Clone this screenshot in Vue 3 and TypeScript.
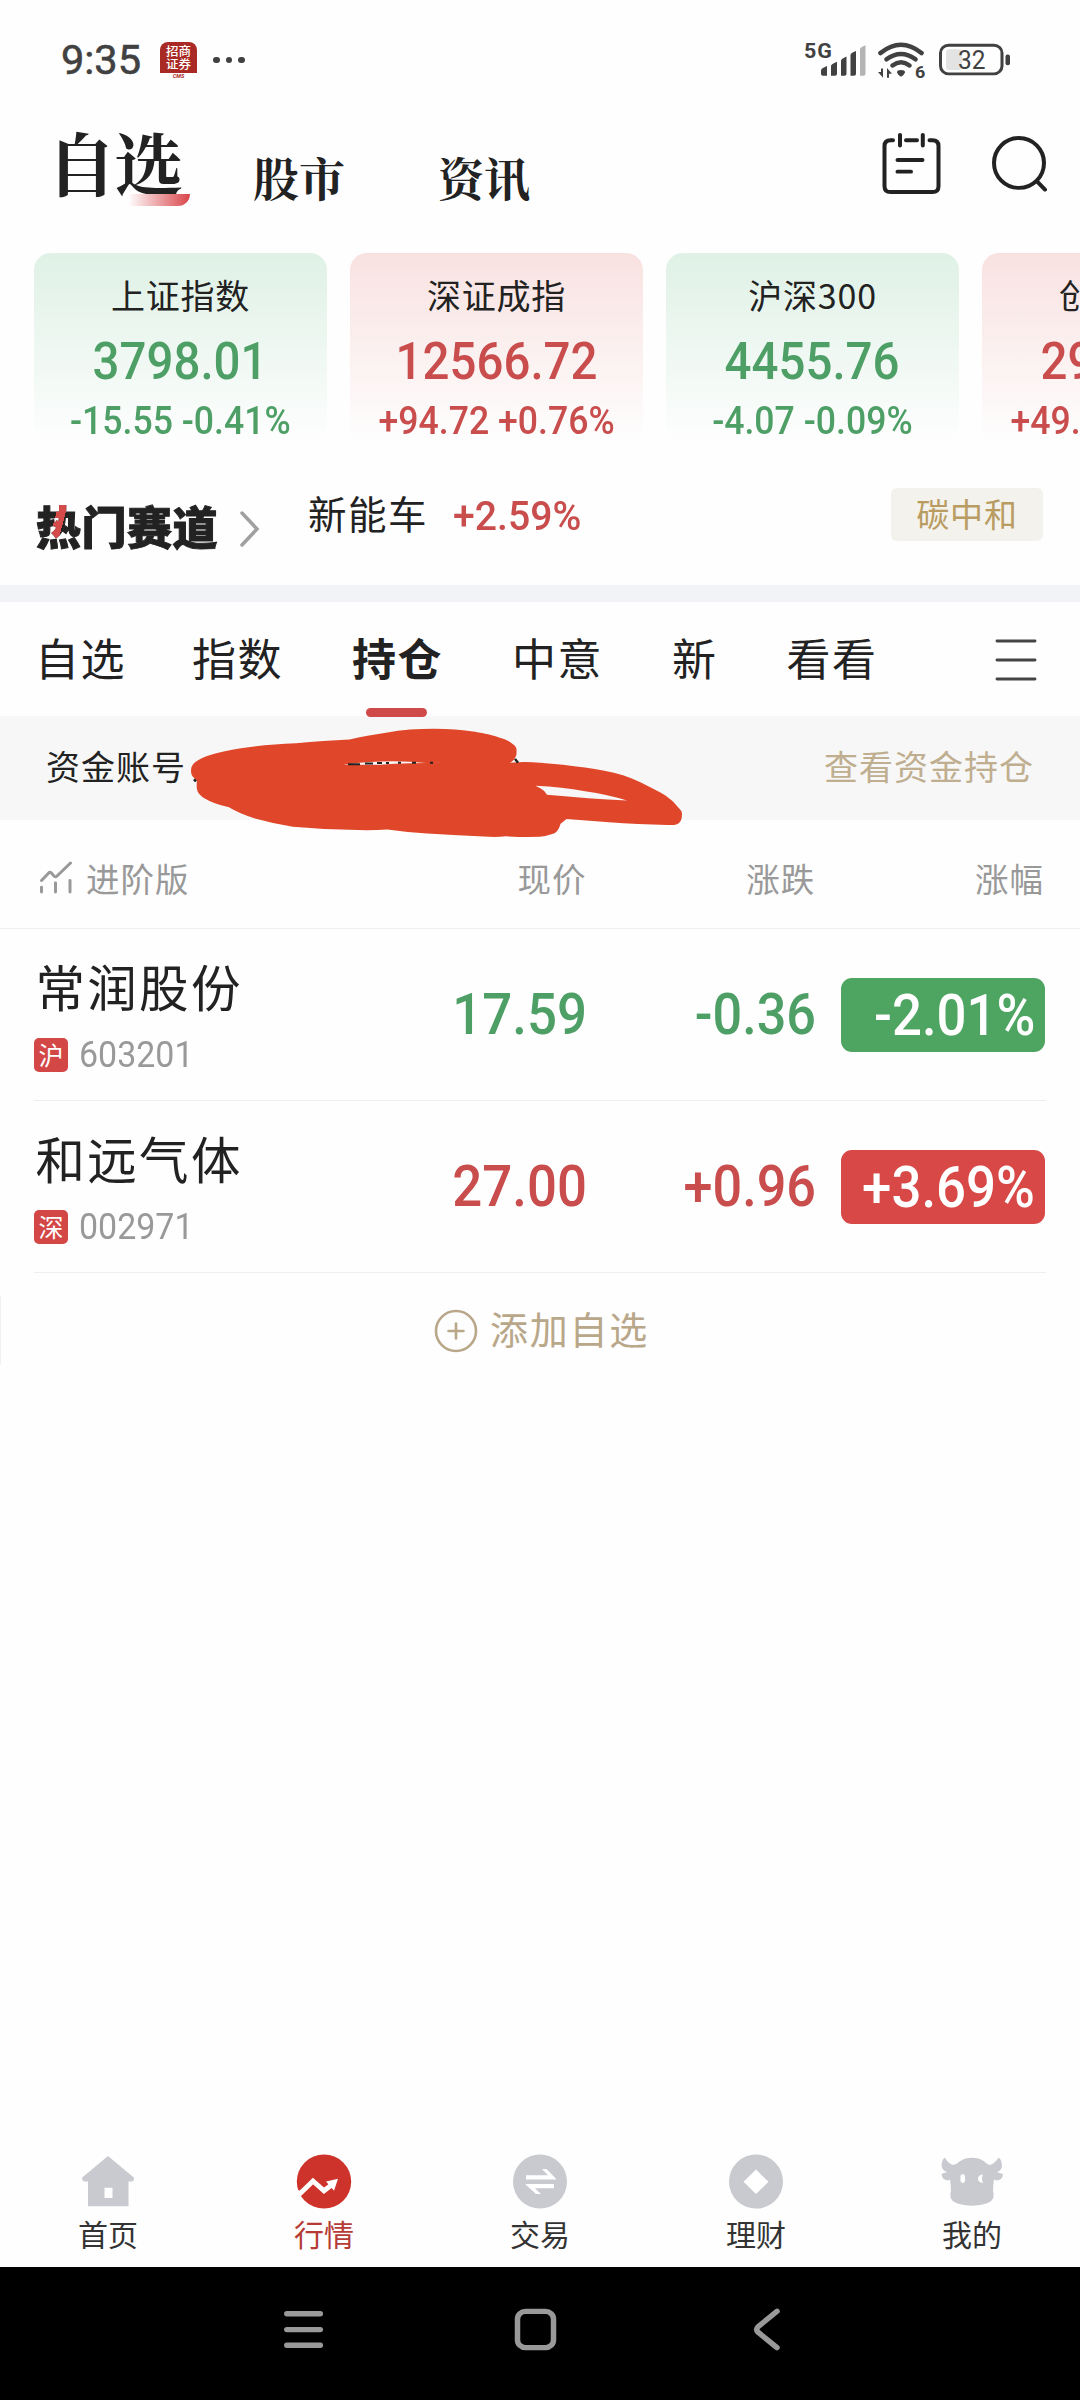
<script setup lang="ts">
interface Quote { name: string; value: string; delta: string; dir: 'up' | 'down' }
interface Stock { name: string; market: string; code: string; price: string; change: string; pct: string; dir: 'up' | 'down' }

const quotes: Quote[] = [
  { name: '上证指数', value: '3798.01', delta: '-15.55 -0.41%', dir: 'down' },
  { name: '深证成指', value: '12566.72', delta: '+94.72 +0.76%', dir: 'up' },
  { name: '沪深300', value: '4455.76', delta: '-4.07 -0.09%', dir: 'down' },
  { name: '创业板指', value: '2964.18', delta: '+49.98 +1.71%', dir: 'up' },
]
const groups = ['自选', '指数', '持仓', '中意', '新', '看看']
const stocks: Stock[] = [
  { name: '常润股份', market: '沪', code: '603201', price: '17.59', change: '-0.36', pct: '-2.01%', dir: 'down' },
  { name: '和远气体', market: '深', code: '002971', price: '27.00', change: '+0.96', pct: '+3.69%', dir: 'up' },
]
const nav = ['首页', '行情', '交易', '理财', '我的']
</script>

<template>
  <div class="screen">
    <header class="status">
      <span class="clock num">9:35</span>
      <span class="app-badge"><b>招商<br>证券</b><i>CMS</i></span>
      <span class="dots"><i /><i /><i /></span>
      <svg class="signals" width="212" height="42.6" viewBox="0 0 212 44" preserveAspectRatio="none">
        <g fill="#414141">
          <text x="0" y="20" font-size="21.500" font-weight="700" textLength="28">5G</text>
          <path d="M17 36v-3.500q0-2 6-4.500v10h-4q-2 0-2-2zM27 38v-10q0-2 6-4.500v12.500q0 2-2 2zM37 38v-15.500q0-2 5.500-4.500v18q0 2-2 2zM46.500 38v-21.500q0-2 5.500-4v23.500q0 2-2 2z" />
          <path d="M56 38v-27.500q0-2 5.500-4v29.500q0 2-2 2z" fill="#b4b4b4" />
          <path d="M97 32q4 0 4 2.500q-1.500 3.500-4 4.500q-2.500-1-4-4.500q0-2.500 4-2.500z" />
          <text x="111" y="40" font-size="18" font-weight="700">6</text>
          <path d="M79 30.500v9.500l-5-6h3v-3.500zM83 40v-10l5 6h-3v4z" />
        </g>
        <g fill="none" stroke="#414141" stroke-width="4.600" stroke-linecap="round">
          <path d="M76.500 14.500q20.500-17 41 0" />
          <path d="M82.500 21q14.500-11 29 0" />
          <path d="M88.500 27.300q8.500-6.500 17 0" />
        </g>
        <rect x="136.500" y="6.500" width="61.500" height="29.500" rx="8" fill="none" stroke="#414141" stroke-width="3" />
        <rect x="142" y="10.500" width="16" height="21.500" rx="3" fill="#e3e3e3" />
        <rect x="201.500" y="16" width="4.500" height="11" rx="2" fill="#414141" />
        <text x="154" y="31" font-size="26" fill="#414141" textLength="27.500" lengthAdjust="spacingAndGlyphs">32</text>
      </svg>
    </header>

    <div class="topbar">
      <span class="main-tab active">自选</span>
      <span class="main-tab">股市</span>
      <span class="main-tab">资讯</span>
      <svg class="top-icons" width="166" height="63.9" viewBox="0 0 166 66" preserveAspectRatio="none" fill="none" stroke="#222" stroke-width="4" stroke-linecap="round">
        <path d="M12 9.500H9.500Q3.500 9.500 3.500 15.500V57Q3.500 63 9.500 63H51.500Q57.500 63 57.500 57V15.500Q57.500 9.500 51.500 9.500H48.500M25 9.500h11M19 4v11M41.800 4v11M16.500 30h25M16.500 42h13.500" />
        <ellipse cx="138" cy="33" rx="25" ry="25.800" /><path d="M156 52l8 8.500" />
      </svg>
    </div>

    <div class="quotes">
      <div v-for="q in quotes" :key="q.name" class="card" :class="q.dir">
        <div class="q-name">{{ q.name }}</div>
        <div class="q-value num">{{ q.value }}</div>
        <div class="q-delta num">{{ q.delta }}</div>
      </div>
    </div>

    <div class="hot">
      <span class="hot-title">热门赛道</span>
      <svg class="hot-arrow" width="22" height="38" viewBox="0 0 22 38"><path d="M3 3L18 19L3 35" fill="none" stroke="#a0a0a0" stroke-width="3.500" stroke-linecap="round" /></svg>
      <span class="sector">新能车</span>
      <span class="sector-pct num">+2.59%</span>
      <span class="tag">碳中和</span>
    </div>

    <div class="groups">
      <span v-for="(g, i) in groups" :key="g" :class="['group', 'g' + i, { on: i === 2 }]">{{ g }}</span>
      <svg class="menu" width="42" height="42" viewBox="0 0 42 42"><path d="M2 2h38M2 21h38M2 40h38" stroke="#444" stroke-width="2.900" stroke-linecap="round" /></svg>
    </div>

    <div class="account">
      <span>资金账号</span>
      <span class="link">查看资金持仓</span>
      <svg class="scribble" width="500" height="116.2" viewBox="188 728 500 120" preserveAspectRatio="none">
        <path fill="#e0472a" fill-rule="evenodd" d="M191 776C191 768 198 765 207 761C218 757 229 755 241 753C259 750 277 749 296 748C315 746 332 745 349.500 744C361 741 374 739 386 737C402 734 418 733 434 733C449 733 462 734 475 736C485 738 492 739 499 742C506 744 510 746 513 749C516 751 517 754 516.500 757C517 761 514 766 510 768C520 767 530 767 540 768C555 769 571 771 585 773C598 775 611 777 623 781C635 785 646 791 657 797C665 801 673 807 678 814C681 817 682 818 682 821C682 826 681 829 678 831C675 832.500 671 832.500 667 832.400C648 832 628 831 609 829.600L566.500 826L560.600 831C559 836 557 840 553.800 841Q547 843.500 540 844.500Q523 845 506 844Q497 845 489 844.500Q458 843 427 841Q407 840 387.400 837Q373 838 358 837.600Q325 837 292.700 834Q274 831 255 825.500Q240 821 229 814Q214 811 203 804C197 799 196 796 197 786.600C193 783 191 781 191 776ZM343 770Q380 765 410 767Q430 769 445 768Q408 768 380 770ZM535.500 791.800Q562 793 585 797.500Q608 801 627 807Q589 805 547 801Q544 796 540 794Z" />
        <path d="M348 769.500h12M365 768.700h8M377 768.200h5M386 768.200h3M398 768h3M412 768h4M430 768h3" stroke="#222" stroke-width="2" />
        <path d="M515 764l3 4M194 785l2 2.500" stroke="#222" stroke-width="2.500" />
      </svg>
    </div>

    <div class="cols head">
      <span class="adv">
        <svg width="34" height="33" viewBox="0 0 34 34" preserveAspectRatio="none" fill="none" stroke="#999" stroke-width="3" stroke-linecap="round" stroke-linejoin="round"><path d="M2.500 20L9.500 12.500Q11 11 12.500 12.500L15 15.500Q16.500 17 18 15.500L31.500 2M2.500 27v5M16.500 22.500v9.500M31 20v12" /></svg>
        进阶版
      </span>
      <span class="c-price">现价</span><span class="c-change">涨跌</span><span class="c-pct">涨幅</span>
    </div>

    <div v-for="s in stocks" :key="s.code" class="cols row" :class="s.dir">
      <div class="stock">
        <div class="s-name">{{ s.name }}</div>
        <div class="s-sub"><span class="mk">{{ s.market }}</span><span class="code num">{{ s.code }}</span></div>
      </div>
      <span class="c-price num">{{ s.price }}</span>
      <span class="c-change num">{{ s.change }}</span>
      <span class="pill"><span class="num">{{ s.pct }}</span></span>
    </div>

    <div class="add">
      <svg width="44" height="44" viewBox="0 0 44 44" fill="none" stroke="#b9a78a" stroke-width="2.600" stroke-linecap="round"><circle cx="22" cy="22" r="20" /><path d="M14.500 22h15M22 14.500v15" /></svg>
      <span>添加自选</span>
    </div>

    <nav class="bottom">
      <div v-for="(n, i) in nav" :key="n" class="nav-item" :class="{ on: i === 1 }">
        <svg width="64" height="58" viewBox="0 0 64 60" preserveAspectRatio="none" fill="#c9cad0">
          <path v-if="i === 0" fill-rule="evenodd" d="M32 2L57.500 24Q59 26 56.500 28.500H52.500V54H12V28.500H8Q5 26 6.500 24ZM28.500 35V45.500H36.500V35Z" />
          <template v-else-if="i === 1">
            <ellipse cx="32" cy="28.500" rx="27.200" ry="28" fill="#cd322b" />
            <path d="M4 39.500L8.500 40.500L21 28L32 38L41 31" fill="none" stroke="#fff" stroke-width="5" /><path d="M34 28.500L46 25.500L42 38Z" fill="#fff" />
          </template>
          <template v-else-if="i === 2">
            <ellipse cx="32" cy="28.500" rx="27" ry="28" />
            <path d="M18 22h22l-6-6.500h4.500L48 25.500v1H18zM46 35.500H27l6 6h-5L17.500 31.500v-.500H46z" fill="#fff" />
          </template>
          <template v-else-if="i === 3">
            <ellipse cx="32" cy="28.500" rx="27" ry="28" /><path d="M32 16L44.500 28.800L32 41.500L19.500 28.800Z" fill="#fff" />
          </template>
          <template v-else>
            <path d="M5 4Q2 5 1.500 12Q2 17 7 19Q3 19.500 1.500 21Q2 26 6 27Q8 28 10 26.500Q11 33 11 38Q9 45 13 49Q20 53.500 32 53.500Q44 53.500 51 49Q55 45 53 38Q53 33 54 26.500Q57 28 59 27Q63 25 63 21Q60 19.500 57 19Q62 17 62 12Q61.500 5 58.500 4Q55 10 50 11.500Q47 11 44 7.500Q39 4 32 4Q25 4 20 7.500Q16 11 13 11.500Q8 10 5 4Z" />
            <rect x="20.500" y="21" width="4.500" height="9" rx="2.200" fill="#fff" /><path d="M43 21Q38 22 38 25.500Q38 29 43 30Q41 25.500 43 21Z" fill="#fff" />
          </template>
        </svg>
        <span>{{ n }}</span>
      </div>
    </nav>

    <footer class="sysnav">
      <svg width="500" height="46.5" viewBox="0 0 500 48" preserveAspectRatio="none" fill="none" stroke="#999" stroke-width="5.500" stroke-linecap="round" stroke-linejoin="round">
        <path d="M6.800 8h33.500M6.800 24.300h33.500M6.800 40.500h33.500" />
        <rect x="237.500" y="5.500" width="36" height="37.500" rx="8" />
        <path d="M497 5.500L478 21.500Q475.500 24.300 478 27L497 43" />
      </svg>
    </footer>
    <i class="edge" />
  </div>
</template>

<style>
body { margin: 0; background: #fdfdfd; }
</style>

<style scoped>
.screen { position: relative; width: 1080px; height: 2400px; overflow: hidden; display: flex; flex-direction: column; background: #fefefe; color: #222; font-family: "Noto Sans CJK SC", sans-serif; white-space: nowrap; }
.screen > * { flex-shrink: 0; }
.num { font-family: Roboto, sans-serif; font-weight: 500; display: inline-block; transform: scaleX(.92); }
.up { color: #c84d4c; }
.down { color: #4d9f66; }

.status { height: 120px; box-sizing: border-box; display: flex; align-items: center; padding: 0 64px 0 61px; }
.clock { font-size: 41.500px; font-weight: 400; line-height: 50px; color: #414141; width: 85px; transform-origin: left; transform: none; -webkit-text-stroke: .6px #414141; }
.app-badge { width: 37px; height: 37px; margin: 0 0 0 14px; border-radius: 8px 8px 6px 6px; background: linear-gradient(#a92a24 0 84%, #fff 84%); color: #fff; display: flex; flex-direction: column; align-items: center; }
.app-badge b { font: 500 12.500px/13.500px "Noto Sans CJK SC", sans-serif; margin-top: 2px; }
.app-badge i { font: italic 700 5.500px/6px Roboto, sans-serif; color: #a92a24; margin-top: 2px; }
.dots { display: flex; gap: 6px; margin: 0 0 0 16px; }
.dots i { width: 6.500px; height: 6.500px; border-radius: 50%; background: #414141; }
.signals { margin-left: auto; font-family: Roboto, sans-serif; }

.topbar { height: 133px; display: flex; align-items: flex-start; padding-left: 47px; }
.main-tab { position: relative; font-family: "Noto Serif CJK SC", "Noto Serif SC", "Noto Sans CJK SC", serif; font-weight: 700; font-size: 46px; line-height: 60px; margin-top: 26px; width: 92px; }
.main-tab + .main-tab { margin-left: 70px; }
.main-tab + .main-tab + .main-tab { margin-left: 93px; }
.main-tab.active { font-size: 69px; letter-spacing: -2px; line-height: 90px; margin-top: -3.500px; width: 136px; }
.main-tab.active::after { content: ""; position: absolute; left: 81px; top: 77.500px; width: 62px; height: 12px; background: linear-gradient(90deg, #fff, #d8454a); border-radius: 0 0 16px 0; }
.top-icons { margin: 10.500px 33px 0 auto; }

.quotes { height: 192px; display: flex; gap: 23px; padding-left: 34px; width: 1240px; }
.card { width: 293px; border-radius: 17px; display: flex; flex-direction: column; align-items: center; flex: none; }
.card.down { background: linear-gradient(#dff1e6, #fefefe); }
.card.up { background: linear-gradient(#f8e2e1, #fefefe); }
.q-name { font-size: 34px; letter-spacing: .8px; line-height: 44px; margin-top: 19.500px; color: #222; }
.q-value { font-size: 51px; line-height: 60px; margin-top: 15px; transform: scaleX(.93); }
.q-delta { font-size: 38.500px; line-height: 46px; margin-top: 6px; transform: scaleX(.925); }

.hot { height: 140px; display: flex; align-items: flex-start; padding-left: 36px; }
.hot-title { font-weight: 900; font-size: 45px; letter-spacing: .5px; line-height: 60px; margin-top: 50.500px; width: 184px; -webkit-text-stroke: 1px transparent; color: transparent; background: linear-gradient(105deg, transparent 24px, #d54b49 24px 33px, transparent 33px) 0 0 / 46px 42px no-repeat, #222; -webkit-background-clip: text; background-clip: text; }
.hot-arrow { margin: 65px 0 0 19px; }
.sector { font-size: 38.500px; letter-spacing: 1.500px; line-height: 50px; margin: 42px 0 0 47px; }
.sector-pct { font-size: 41px; line-height: 50px; margin: 45.500px 0 0 22px; color: #c84d4c; transform: scaleX(.955); }
.tag { margin: 42.500px 37px 0 auto; width: 152px; height: 53px; border-radius: 6px; background: #f4f2ed; color: #b99c62; font-size: 33px; letter-spacing: .8px; line-height: 51px; text-align: center; }

.groups { height: 114px; border-top: 17px solid #f2f3f6; display: flex; align-items: flex-start; padding-left: 35px; }
.group { position: relative; font-size: 44px; letter-spacing: 1.500px; line-height: 60px; margin: 25px 0 0; }
.g1 { margin-left: 66px; }
.g2, .g3, .g4 { margin-left: 69px; }
.g5 { margin-left: 69px; }
.group.on { font-weight: 700; }
.group.on::after { content: ""; position: absolute; z-index: 1; left: 14px; top: 81px; width: 61px; height: 9px; border-radius: 5px; background: #d04a4a; }
.menu { margin: 36.500px 43.500px 0 auto; }

.account { position: relative; height: 104px; background: #f7f7f7; display: flex; justify-content: space-between; align-items: center; padding: 0 46px 6px; font-size: 34px; letter-spacing: 1px; box-sizing: border-box; }
.link { color: #bfae8f; }
.scribble { position: absolute; left: 188px; top: 8px; }

.cols { display: flex; align-items: center; box-sizing: border-box; position: relative; }
.c-price { width: 240px; text-align: right; transform-origin: right; }
.c-change { width: 229px; text-align: right; transform-origin: right; }
.c-pct { width: 229px; text-align: right; }
.head { height: 109px; padding: 7px 36px 0 39px; color: #999; font-size: 33.500px; letter-spacing: 1px; border-bottom: 1px solid #eee; }
.adv { display: flex; align-items: center; gap: 13px; width: 308px; }
.row { height: 172px; margin: 0 34px; border-bottom: 1px solid #eee; align-items: flex-start; }
.stock { width: 312.500px; }
.s-name { color: #222; font-size: 49.500px; letter-spacing: 2.300px; line-height: 66px; margin: 24px 0 0 1.500px; }
.s-sub { display: flex; align-items: center; margin-top: 17px; height: 38px; }
.mk { width: 34px; height: 34px; border-radius: 5px; background: #d34747; color: #fff; font-size: 25px; line-height: 32px; text-align: center; }
.code { font-size: 36.500px; line-height: 38px; font-weight: 400; color: #999; margin-left: 11px; transform-origin: left; transform: scaleX(.93); }
.row > .num { font-size: 58px; line-height: 70px; margin-top: 50px; }
.row > .c-price { transform: scaleX(.91); }
.row > .c-change { transform: scaleX(.9); }
.pill { box-sizing: border-box; display: flex; align-items: center; justify-content: flex-end; width: 204px; height: 74px; margin: 49px 0 0 25.500px; padding: 0 10px 1px 0; border-radius: 11px; color: #fff; font-size: 58px; line-height: 70px; }
.pill .num { transform-origin: right; transform: scaleX(.91); }
.down .pill { background: #4da561; }
.up .pill { background: #d74846; }

.add { height: 112px; display: flex; align-items: center; justify-content: center; gap: 12px; padding-left: 3px; color: #b9a78a; font-size: 38px; letter-spacing: 1.700px; }
.add span { margin-bottom: 4px; }
.add svg { margin-top: 3px; }
.edge { position: absolute; left: 0; top: 1296px; width: 1px; height: 69px; background: #f0f0f0; }

.bottom { margin-top: auto; height: 113px; display: flex; }
.nav-item { width: 216px; display: flex; flex-direction: column; align-items: center; color: #333; font-size: 30px; }
.nav-item span { line-height: 40px; margin-top: 1px; }
.nav-item.on span { color: #b63b37; }
.sysnav { height: 133px; background: #000; }
.sysnav svg { display: block; margin: 39px 0 0 280px; }
</style>
